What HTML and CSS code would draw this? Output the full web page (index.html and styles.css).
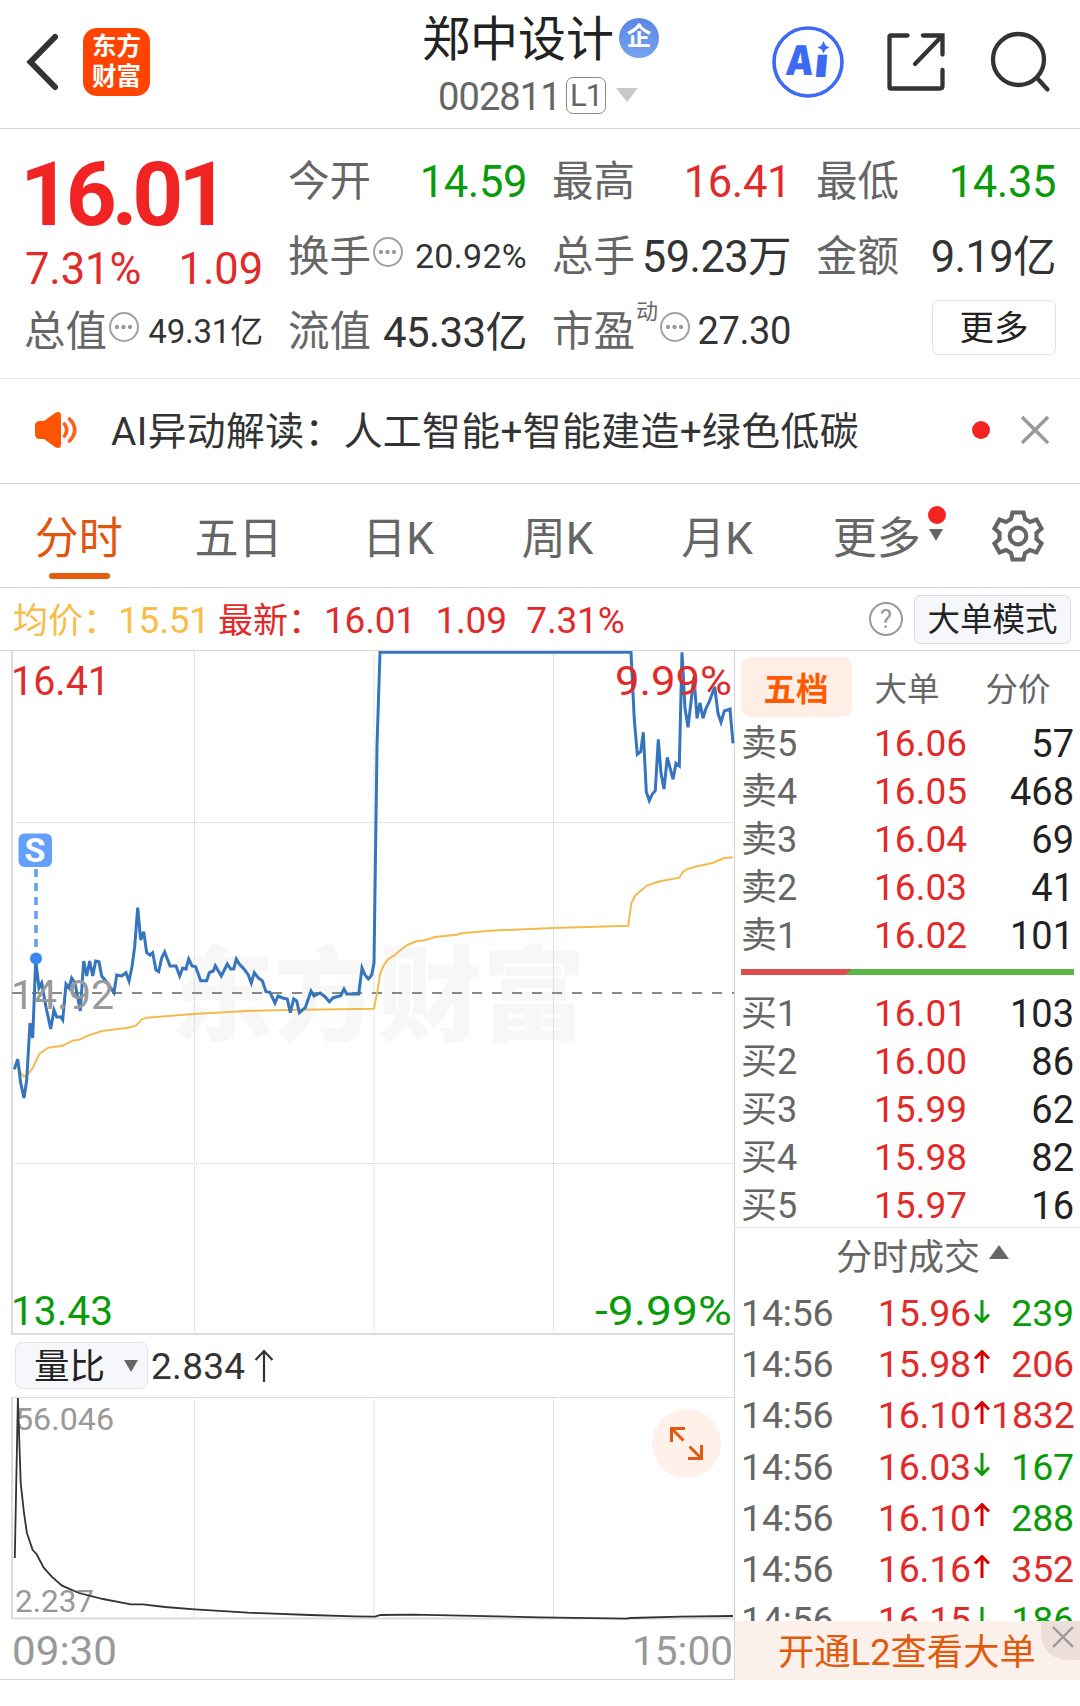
FILE: index.html
```html
<!DOCTYPE html>
<html lang="zh-CN">
  <head>
    <meta charset="UTF-8" />
    <meta name="viewport" content="width=device-width, initial-scale=1.0" />
    <title>郑中设计 002811</title>
    <link rel="stylesheet" href="styles.css">
  </head>
  <body>
    <header class="topbar">
      <div class="topbar-left">
        <svg class="back" width="40" height="60" viewBox="0 0 40 60">
          <path d="M33 5 L8.500 30 L33 55" />
        </svg>
        <div class="logo"><span>东方</span><span>财富</span></div>
      </div>

      <div class="stock">
        <div class="stock-name">郑中设计<span class="corp">企</span></div>
        <div class="stock-code">
          <span class="code">002811</span><span class="level">L1</span><i class="tri-down light"></i>
        </div>
      </div>

      <div class="topbar-right">
        <svg width="72" height="72" viewBox="0 0 72 72">
          <circle cx="36" cy="36" r="34" fill="none" stroke="#3c6af5" stroke-width="3.600" />
          <g transform="skewX(-5)">
            <text class="ai-text" x="17" y="49" textLength="28" lengthAdjust="spacingAndGlyphs">A</text>
            <text class="ai-text" x="46" y="51" textLength="14" lengthAdjust="spacingAndGlyphs">ı</text>
          </g>
          <path d="M51.500 15 L53.500 19.500 L57.500 21.500 L53.500 23.500 L51.500 27.500 L49.500 23.500 L45.500 21.500 L49.500 19.500Z" fill="#3c6af5" />
        </svg>
        <svg class="line-icon share" width="60" height="60" viewBox="0 0 60 60">
          <path d="M21.500 3.500 H5 Q3.500 3.500 3.500 5 V55 Q3.500 56.500 5 56.500 H54 Q56.500 56.500 56.500 54 V38 M37 3.500 H56.500 V22.500 M56.500 3.500 L29 32" />
        </svg>
        <svg class="line-icon" width="62" height="62" viewBox="0 0 62 62">
          <circle cx="29.500" cy="28.500" r="25.500" />
          <path d="M48.500 47.500 L58.500 58.500" />
        </svg>
      </div>
    </header>

    <section class="quote">
      <div class="price-box">
        <div class="price">16.01</div>
        <div class="change"><span>7.31%</span><span>1.09</span></div>
      </div>
      <div class="item"><label>今开</label><b class="green">14.59</b></div>
      <div class="item"><label>最高</label><b class="red">16.41</b></div>
      <div class="item"><label>最低</label><b class="green">14.35</b></div>
      <div class="item"><label>换手</label><i class="dots"></i><b class="small">20.92%</b></div>
      <div class="item"><label>总手</label><b class="unit">59.23万</b></div>
      <div class="item"><label>金额</label><b class="unit">9.19亿</b></div>
      <div class="item"><label>总值</label><i class="dots"></i><b class="small unit">49.31亿</b></div>
      <div class="item"><label>流值</label><b class="mid unit">45.33亿</b></div>
      <div class="item"><label>市盈</label><sup>动</sup><i class="dots"></i><b class="pe">27.30</b></div>
      <div class="item"><button class="more-btn">更多</button></div>
    </section>

    <section class="news">
      <svg width="46" height="38" viewBox="0 0 46 38">
        <path d="M2 15 Q2 10 7 10 H11 L22 2 Q28 -1 28 5 V33 Q28 39 22 36 L11 28 H7 Q2 28 2 23Z" fill="#ff5500" />
        <path d="M31.500 13 Q36 19 31.500 25 M36.500 8 Q47 19 36.500 30" fill="none" stroke="#ff5f1a" stroke-width="3.600" stroke-linecap="round" />
      </svg>
      <p>AI异动解读：人工智能+智能建造+绿色低碳</p>
      <i class="dot"></i>
      <svg width="30" height="30" viewBox="0 0 30 30">
        <path d="M2 2 L28 28 M28 2 L2 28" stroke="#999" stroke-width="3.400" />
      </svg>
    </section>

    <nav class="tabs">
      <a class="active">分时</a>
      <a>五日</a>
      <a>日K</a>
      <a>周K</a>
      <a>月K</a>
      <a class="more">更多<i class="dot"></i><i class="tri-down"></i></a>
      <svg class="gear" width="54" height="54" viewBox="-27 -27 54 54">
        <path d="M-5.500 -23.500 H5.500 L7 -17 L12 -14 L18.500 -16.500 L23.500 -7.500 L18.500 -3 V3 L23.500 7.500 L18.500 16.500 L12 14 L7 17 L5.500 23.500 H-5.500 L-7 17 L-12 14 L-18.500 16.500 L-23.500 7.500 L-18.500 3 V-3 L-23.500 -7.500 L-18.500 -16.500 L-12 -14 L-7 -17Z" />
        <circle r="8.300" />
      </svg>
    </nav>

    <section class="info">
      <span class="avg">均价：<em>15.51</em></span>
      <span class="last">最新：<em>16.01</em><em>1.09</em><em>7.31%</em></span>
      <span class="help">?</span>
      <button class="mode-btn">大单模式</button>
    </section>

    <main class="board">
      <div class="charts">
        <svg class="minute" width="735" height="684" viewBox="0 651 735 684">
          <text class="watermark" x="170" y="1033" textLength="416" lengthAdjust="spacingAndGlyphs">东方财富</text>
          <path class="grid" d="M194.500 651 V1333 M374 651 V1333 M553.500 651 V1333 M12 822.500 H734 M12 1163.500 H734" />
          <path class="frame" d="M12 651 V1334 H734" />
          <path d="M12 993 H734" stroke="#888" stroke-width="2" stroke-dasharray="10 10" />
          <polyline class="avg-line" points="14,1069 18,1062 20.7,1072.7 24,1076.7 28.3,1074 33.3,1066.7 39.3,1054 48.3,1047.7 62.7,1045.7 72.7,1040.7 80.7,1039.3 85,1036.7 101.7,1031 128.3,1027.7 136,1025.7 141.7,1019.3 146.7,1017.7 193.3,1014 246.7,1011 300,1009.7 374,1008.7 377.3,991.7 380.3,973.3 383.3,966 388.3,959 394,955.7 398.3,951.7 407.3,945 416.7,941.3 425,940.3 435,937 456.7,934.7 461.7,933.3 490,930.7 553.3,928 628.3,925.7 631.3,903.3 635,895.7 640.7,890.7 647.3,885.3 660,881.3 679.3,877.7 682.7,872.3 686.7,869.3 695,866.7 713.3,862.7 723.3,858.3 732.7,857.3" />
          <polyline class="price-line" points="14.3,1069.3 17.7,1059.3 20.7,1083 24,1098 26.7,1080 30,1023 32.7,1038 35.7,960 39,988 41.7,983 46,1007 50.7,1029 54,1010 56.7,1017 60.7,1017 62.7,1020 66,984 69,988 71.7,978 75,983 80.3,1011 83.7,961 86.7,976 89.7,961 92.7,976 95.7,961 99,961.7 101.7,976 106.7,982 114,992.7 116.7,975 121.7,976 126,972.7 129,981 132,966.7 134.7,946.7 137.7,907.7 140.7,940 143.7,931.7 146.7,952.7 150,955 152.7,952.7 156,970 158.7,971.7 161.7,958 164.7,952 170,966 176,966 179.7,976 182.7,968 186,969 188.7,959 192,966 195.7,966.7 200.7,980.7 206.7,980.7 209.3,972.7 213.3,971 215.3,965.7 221.3,976 227.3,964 230.7,969 233.7,969 236.3,959 239.3,964 244,969 248.3,975 251.3,983 254.3,972.7 258.3,978 262.3,980.7 266,991.7 270,992.3 275,1003 278,996 282.7,998 287.3,999 290.3,1012.7 293.7,999 296.7,1001 299.3,1012.7 305.3,1007.7 311,991 314,996 320,993 325,996.7 329.3,1001.7 333.3,997.7 340.7,995.7 344,989 346.7,994 351.7,994 358.7,994 362,968 365,975 368.3,979 371.7,975 374,963.3 377,746 380,652.3 631,652.3 634.3,720 637.3,754.3 640.7,751.7 643.3,732.3 646.3,791.7 649.3,800.7 652.3,794 655.3,790.7 658.3,739.3 661,773.3 664,789 667.3,757.3 673,779.3 676,763.3 679.3,766 682,652.3 685,708.3 688,727.3 694,676.7 697,718.3 700,702.7 703,718.3 706,708.3 709.3,701.7 714.7,686.7 718,713.3 721,722.3 724.3,711 730,709 733,743.3" />
          <!-- sell marker -->
          <path d="M36 869 V947" stroke="#62a0fb" stroke-width="3.600" stroke-dasharray="8 6" />
          <circle cx="36" cy="958.500" r="6" fill="#3a85f5" />
          <rect x="18.500" y="833.500" width="33.500" height="33.500" rx="6" fill="#62a0fb" />
          <text class="mark" x="35" y="862">S</text>
          <text class="axis red" x="11" y="695" textLength="99" lengthAdjust="spacingAndGlyphs">16.41</text>
          <text class="axis red end" x="732" y="695" textLength="117" lengthAdjust="spacingAndGlyphs">9.99%</text>
          <text class="axis gray" x="11" y="1009" textLength="103" lengthAdjust="spacingAndGlyphs">14.92</text>
          <text class="axis green" x="11" y="1325" textLength="102" lengthAdjust="spacingAndGlyphs">13.43</text>
          <text class="axis green end" x="732" y="1325" textLength="137" lengthAdjust="spacingAndGlyphs">-9.99%</text>
        </svg>

        <div class="indicator">
          <button class="select">量比<i class="tri-down"></i></button>
          <span>2.834</span>
          <svg width="20" height="34" viewBox="0 0 20 34">
            <path d="M10 33 V2 M1.500 11 L10 2 L18.500 11" fill="none" stroke="#333" stroke-width="2.200" />
          </svg>
        </div>

        <svg class="ratio" width="735" height="282" viewBox="0 1397 735 282">
          <path class="grid" d="M194.500 1398 V1618 M374 1398 V1618 M553.500 1398 V1618" />
          <path d="M12 1397.500 H734" stroke="#ddd" stroke-width="1" />
          <path class="frame" d="M12 1397 V1618.500 H734" />
          <text class="scale" x="15" y="1430" textLength="99" lengthAdjust="spacingAndGlyphs">56.046</text>
          <text class="scale" x="15" y="1612" textLength="79" lengthAdjust="spacingAndGlyphs">2.237</text>
          <polyline class="ratio-line" points="14.8,1558 17.9,1398 20.7,1483 24,1513 26.9,1533 32.7,1550 36.5,1554 43.7,1567.7 51.7,1576.7 62,1585.7 79,1593 103,1599 131,1604.3 143,1604.3 165,1607 194.6,1609.3 248,1612.7 310,1615 354.7,1616.3 375,1616.7 380.5,1615 413,1614.7 540,1617.3 626,1618.7 631,1618 680,1616.7 733,1616" />
          <circle cx="686.500" cy="1443.500" r="34.500" fill="#fff0e9" />
          <path class="expand" d="M671.500 1442 V1428.500 H685 M672 1429 L683.500 1440.500 M688 1458.500 H701.500 V1445 M701 1458 L689.500 1446.500" />
          <text class="axis gray" x="12" y="1665" textLength="105" lengthAdjust="spacingAndGlyphs">09:30</text>
          <text class="axis gray end" x="733" y="1665" textLength="101" lengthAdjust="spacingAndGlyphs">15:00</text>
        </svg>
      </div>

      <aside class="side">
        <div class="side-tabs"><a class="active">五档</a><a>大单</a><a>分价</a></div>

        <ul class="orders">
          <li><span>卖5</span><b>16.06</b><em>57</em></li>
          <li><span>卖4</span><b>16.05</b><em>468</em></li>
          <li><span>卖3</span><b>16.04</b><em>69</em></li>
          <li><span>卖2</span><b>16.03</b><em>41</em></li>
          <li><span>卖1</span><b>16.02</b><em>101</em></li>
        </ul>
        <div class="ratio-bar"></div>
        <ul class="orders">
          <li><span>买1</span><b>16.01</b><em>103</em></li>
          <li><span>买2</span><b>16.00</b><em>86</em></li>
          <li><span>买3</span><b>15.99</b><em>62</em></li>
          <li><span>买4</span><b>15.98</b><em>82</em></li>
          <li><span>买5</span><b>15.97</b><em>16</em></li>
        </ul>

        <div class="deals-title">分时成交<i class="tri-up"></i></div>
        <ul class="deals">
          <li><span>14:56</span><b>15.96</b><svg class="arrow down" viewBox="0 0 16 24"><path d="M8 23 V1 M1 8.500 L8 1.500 L15 8.500" /></svg><em class="green">239</em></li>
          <li><span>14:56</span><b>15.98</b><svg class="arrow" viewBox="0 0 16 24"><path d="M8 23 V1 M1 8.500 L8 1.500 L15 8.500" /></svg><em class="red">206</em></li>
          <li><span>14:56</span><b>16.10</b><svg class="arrow" viewBox="0 0 16 24"><path d="M8 23 V1 M1 8.500 L8 1.500 L15 8.500" /></svg><em class="red">1832</em></li>
          <li><span>14:56</span><b>16.03</b><svg class="arrow down" viewBox="0 0 16 24"><path d="M8 23 V1 M1 8.500 L8 1.500 L15 8.500" /></svg><em class="green">167</em></li>
          <li><span>14:56</span><b>16.10</b><svg class="arrow" viewBox="0 0 16 24"><path d="M8 23 V1 M1 8.500 L8 1.500 L15 8.500" /></svg><em class="green">288</em></li>
          <li><span>14:56</span><b>16.16</b><svg class="arrow" viewBox="0 0 16 24"><path d="M8 23 V1 M1 8.500 L8 1.500 L15 8.500" /></svg><em class="red">352</em></li>
          <li><span>14:56</span><b>16.15</b><svg class="arrow down" viewBox="0 0 16 24"><path d="M8 23 V1 M1 8.500 L8 1.500 L15 8.500" /></svg><em class="green">186</em></li>
        </ul>

        <div class="promo">
          开通L2查看大单
          <span class="promo-close">
            <svg width="22" height="22" viewBox="0 0 22 22">
              <path d="M1 1 L21 21 M21 1 L1 21" stroke="#999" stroke-width="2.400" />
            </svg>
          </span>
        </div>
      </aside>
    </main>
  </body>
</html>
```

FILE: styles.css
```css
* {
  margin: 0;
  padding: 0;
  box-sizing: border-box;
}

body {
  width: 1080px;
  height: 1706px;
  background: #fff;
  color: #333;
  font-family: Roboto, "Noto Sans CJK SC", sans-serif;
  overflow: hidden;
}

b,
em,
i {
  font-weight: normal;
  font-style: normal;
}

ul {
  list-style: none;
}

svg {
  display: block;
  flex: none;
}

button {
  font-family: inherit;
  color: #222;
}

.red {
  color: #e12b2b;
  fill: #e12b2b;
}

.green {
  color: #0a9b0a;
  fill: #0a9b0a;
}

.gray {
  fill: #999;
}

.dot {
  width: 18px;
  height: 18px;
  border-radius: 50%;
  background: #f22424;
}

.tri-down {
  border: 7.5px solid transparent;
  border-top: 12px solid #666;
  border-bottom: 0;
}

.tri-down.light {
  border-width: 14px 11px 0;
  border-top-color: #c8c8c8;
}

.tri-up {
  border: 10.5px solid transparent;
  border-bottom: 14px solid #666;
  border-top: 0;
}

/* top bar */
.topbar {
  display: grid;
  grid-template-columns: 360px 1fr 360px;
  height: 129px;
  border-bottom: 1px solid #d6d6d6;
}

.topbar-left {
  display: flex;
  align-items: center;
  height: 123px;
  padding-left: 22px;
}

.back path {
  fill: none;
  stroke: #333;
  stroke-width: 6;
  stroke-linecap: round;
}

.logo {
  display: flex;
  flex-direction: column;
  justify-content: center;
  width: 67px;
  height: 68px;
  margin-left: 21px;
  border-radius: 14px;
  background: #ff4400;
  color: #fff;
  font-size: 24.5px;
  font-weight: 700;
  line-height: 30px;
  text-align: center;
}

.stock {
  padding-top: 4px;
}

.stock-name {
  display: flex;
  align-items: center;
  height: 62px;
  padding-left: 62px;
  font-size: 48px;
  color: #222;
}

.corp {
  width: 40px;
  height: 40px;
  margin: 5px 0 0 5px;
  border-radius: 50%;
  background: linear-gradient(#5a85e6, #76a3ee);
  color: #fff;
  font-size: 25px;
  font-weight: 700;
  line-height: 38px;
  text-align: center;
}

.stock-code {
  display: flex;
  align-items: center;
  height: 58px;
  padding-left: 78px;
  color: #666;
}

.code {
  width: 128px;
  padding-top: 3px;
  font-size: 38px;
  letter-spacing: -0.9px;
}

.level {
  width: 40px;
  height: 37px;
  border: 1.5px solid #888;
  border-radius: 7px;
  font-size: 31px;
  line-height: 36px;
  letter-spacing: -1px;
  text-align: center;
}

.stock-code .tri-down {
  margin-left: 10px;
}

.topbar-right {
  display: flex;
  align-items: center;
  height: 123px;
  padding-left: 52px;
}

.ai-text {
  font: 900 41px Inter, sans-serif;
  fill: #3c6af5;
}

.line-icon {
  fill: none;
  stroke: #333;
  stroke-width: 4.3;
  stroke-linecap: round;
}

.share {
  margin: 0 43px 0 42px;
}

/* quote numbers */
.quote {
  display: grid;
  grid-template-columns: 238px 238px 238px 239px;
  grid-auto-rows: 75px;
  column-gap: 26px;
  height: 250px;
  padding: 13px 0 0 25px;
  border-bottom: 1px solid #e8e8e8;
}

.price-box {
  grid-row: span 2;
  color: #f12424;
}

.price {
  height: 106px;
  margin-left: -5px;
  font-size: 89px;
  font-weight: 700;
  line-height: 106px;
  letter-spacing: -5.2px;
}

.change {
  display: flex;
  justify-content: space-between;
  font-size: 43.5px;
  line-height: 44px;
  letter-spacing: -0.1px;
  color: #e12b2b;
}

.item {
  display: flex;
  align-items: center;
  white-space: nowrap;
}

.item label {
  margin: -3px 0 0 -1px;
  font-size: 41.5px;
  color: #666;
}

.item b {
  margin: 5px 0 0 auto;
  font-size: 43.5px;
  letter-spacing: -0.4px;
}

.item .unit {
  margin-top: -3px;
  letter-spacing: -0.6px;
}

.item .small {
  margin-top: 2px;
  font-size: 34px;
  letter-spacing: 0.3px;
}

.item .small.unit {
  margin-top: -2px;
  font-size: 33px;
  letter-spacing: -0.2px;
}

.item .mid {
  font-size: 42px;
}

.item .pe {
  margin-top: 2px;
  font-size: 38px;
}

.item sup {
  align-self: flex-start;
  margin: 1px 0 0 1px;
  font-size: 22px;
  color: #666;
}

/* circle with three dots */
.dots {
  width: 30px;
  height: 30px;
  margin: -6px 0 0 2px;
  border: 2.5px solid #a0a0a0;
  border-radius: 50%;
  background:
    radial-gradient(circle at 6px 50%, #999 1.8px, transparent 2.4px),
    radial-gradient(circle at 12.5px 50%, #999 1.8px, transparent 2.4px),
    radial-gradient(circle at 19px 50%, #999 1.8px, transparent 2.4px);
}

.more-btn {
  width: 124px;
  height: 55px;
  margin: -4px 0 0 auto;
  border: 1.5px solid #e3e3e3;
  border-radius: 7px;
  background: #fff;
  font-size: 34.5px;
  line-height: 52px;
}

/* news strip */
.news {
  display: flex;
  align-items: center;
  height: 105px;
  padding: 0 30px 2px 33px;
  border-bottom: 1px solid #d6d6d6;
}

.news p {
  flex: 1;
  margin-top: -4px;
  padding-left: 32px;
  font-size: 38.8px;
  letter-spacing: 0.4px;
  white-space: nowrap;
}

.news .dot {
  margin-right: 30px;
}

/* period tabs */
.tabs {
  display: grid;
  grid-template-columns: repeat(6, 159.6px) 1fr;
  grid-template-rows: 103px;
  height: 104px;
  border-bottom: 1px solid #d6d6d6;
}

.tabs a {
  position: relative;
  padding-right: 2px;
  font-size: 44px;
  line-height: 111px;
  text-align: center;
  color: #666;
}

.tabs .active {
  color: #e0560e;
}

.tabs .active::after {
  content: "";
  position: absolute;
  left: 49px;
  top: 89px;
  width: 61px;
  height: 6px;
  border-radius: 3px;
  background: #e85a0c;
}

.tabs .dot {
  position: absolute;
  left: 130px;
  top: 22px;
}

.tabs .tri-down {
  position: absolute;
  left: 131.5px;
  top: 45px;
}

.gear {
  align-self: center;
  margin: 0 0 0 33.5px;
}

.gear path,
.gear circle {
  fill: none;
  stroke: #666;
  stroke-width: 4.2;
}

/* average / last price */
.info {
  display: flex;
  align-items: center;
  height: 63px;
  padding: 0 9px 0 13px;
  border-bottom: 1px solid #d6d6d6;
  font-size: 35px;
  white-space: nowrap;
}

.info em {
  font-size: 37px;
  letter-spacing: -0.2px;
}

.info .avg,
.info .last {
  margin-top: -4px;
}

.info .avg {
  width: 205px;
  color: #f8bc48;
}

.info .last {
  color: #e12b2b;
}

.last em {
  margin-left: 1px;
}

.last em + em {
  margin-left: 19.5px;
}

.help {
  width: 34px;
  height: 34px;
  margin: 0 11px 0 auto;
  border: 2.5px solid #999;
  border-radius: 50%;
  font-size: 26px;
  line-height: 30px;
  text-align: center;
  color: #999;
}

.mode-btn {
  width: 157px;
  height: 49px;
  border: 1.5px solid #dcdde1;
  border-radius: 6px;
  background: #f6f7fa;
  font-size: 32.5px;
  line-height: 49px;
}

/* charts and side panel */
.board {
  display: flex;
  height: 1029px;
  border-bottom: 1px solid #d6d6d6;
}

.charts {
  width: 735px;
  border-right: 1px solid #d3d3d8;
}

.grid {
  fill: none;
  stroke: #d0d0d0;
  stroke-width: 1;
  stroke-dasharray: 1 1;
}

.frame {
  fill: none;
  stroke: #dcdcdc;
  stroke-width: 2;
}

.avg-line {
  fill: none;
  stroke: #f3bb4e;
  stroke-width: 2;
}

.price-line {
  fill: none;
  stroke: #3475bd;
  stroke-width: 3;
}

.ratio-line {
  fill: none;
  stroke: #333;
  stroke-width: 1.8;
}

.watermark {
  font: 900 103px "Noto Sans CJK SC", sans-serif;
  fill: #f7f7f7;
}

.mark {
  font: 700 34px Roboto, sans-serif;
  fill: #fff;
  text-anchor: middle;
}

.axis {
  font-size: 40px;
}

.scale {
  font-size: 31px;
  fill: #999;
}

.end {
  text-anchor: end;
}

.expand {
  fill: none;
  stroke: #e05a10;
  stroke-width: 3;
}

.indicator {
  display: flex;
  align-items: center;
  height: 62px;
  padding-left: 15px;
  font-size: 37px;
  letter-spacing: 0.3px;
}

.select {
  display: flex;
  align-items: center;
  justify-content: space-between;
  width: 133px;
  height: 47px;
  margin: -1px 3px 0 0;
  padding: 0 9px 4px 18px;
  border: 1.5px solid #e2e4e8;
  border-radius: 7px;
  background: #f6f7fa;
  font-size: 35.5px;
}

.select .tri-down {
  margin-top: 4px;
}

.indicator span {
  margin-right: 9px;
}

.side {
  width: 345px;
}

.side-tabs {
  display: grid;
  grid-template-columns: repeat(3, 111px);
  padding: 6px 0 0 6px;
}

.side-tabs a {
  height: 60px;
  padding-right: 1px;
  border-radius: 9px;
  font-size: 32.5px;
  line-height: 66px;
  text-align: center;
  color: #666;
}

.side-tabs .active {
  background: #ffeee6;
  font-weight: 700;
  color: #ff5a00;
}

.orders {
  height: 242px;
  padding: 3px 6px 0 6px;
  font-size: 37px;
}

.orders li {
  display: grid;
  grid-template-columns: 75px 151px 1fr;
  height: 48px;
  line-height: 48px;
  text-align: right;
}

.orders span {
  font-size: 36px;
  text-align: left;
  color: #666;
}

.orders b {
  color: #e12b2b;
}

.orders em {
  font-size: 38px;
  color: #222;
}

/* sell share in red, buy share in green */
.ratio-bar {
  height: 6px;
  margin: 10px 6px 12px;
  background: linear-gradient(135deg, #e04c4c 32.5%, #5cb646 32.5%);
}

.deals-title {
  display: flex;
  align-items: center;
  height: 58px;
  margin-top: -2px;
  border-top: 1px solid #e4e4e4;
  padding: 0 0 5px 101px;
  font-size: 36px;
  color: #666;
}

.deals-title .tri-up {
  margin: -4px 0 0 9px;
}

.deals {
  height: 336px;
  padding: 3px 6px 0 6px;
  overflow: hidden;
  font-size: 37.5px;
}

.deals li {
  display: grid;
  grid-template-columns: 97px 133px 20px 1fr;
  align-items: center;
  height: 51.2px;
  line-height: 51px;
  letter-spacing: -0.2px;
  text-align: right;
}

.deals span {
  text-align: left;
  color: #666;
}

.deals b {
  color: #e12b2b;
}

.arrow {
  width: 16px;
  height: 24px;
  margin: -6px 0 0 3px;
  fill: none;
  stroke: #d90000;
  stroke-width: 3;
}

.arrow.down {
  transform: rotate(180deg);
  stroke: #0a9b0a;
}

.promo {
  position: relative;
  height: 59px;
  padding-left: 43px;
  background: #fcf0ea;
  font-size: 36.3px;
  line-height: 64px;
  color: #e05a10;
}

.promo-close {
  position: absolute;
  right: 0;
  top: 0;
  width: 39px;
  height: 39px;
  padding: 5px 0 0 11px;
  border-bottom-left-radius: 26px;
  background: #ecdfd9;
}
```
